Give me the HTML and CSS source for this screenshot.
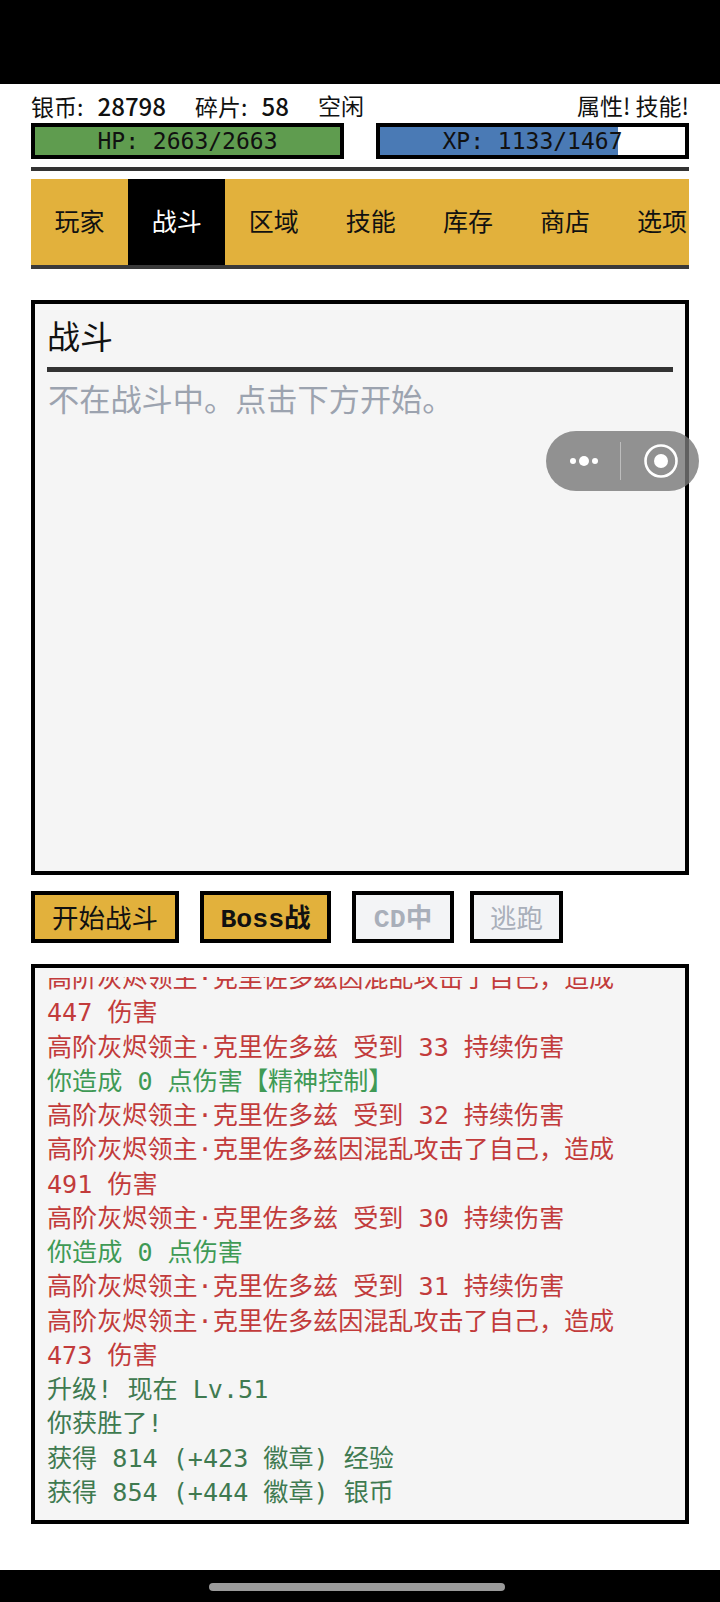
FILE: index.html
```html
<!DOCTYPE html>
<html lang="en">
<head>
    <meta charset="UTF-8">
    <meta name="viewport" content="width=device-width, initial-scale=1.0">
    <title>战斗</title>
    <link rel="stylesheet" href="styles.css">
</head>
<body>
    <div class="status-bar"></div>
    <main class="container">
        <div class="top-row">
            <div class="currency">
                <span class="stat">银币: <b>28798</b></span>
                <span class="stat">碎片: <b>58</b></span>
                <span class="stat">空闲</span>
            </div>
            <div class="alerts">属性! 技能!</div>
        </div>
        <div class="bars">
            <div class="bar"><div class="fill hp"></div><span>HP: 2663/2663</span></div>
            <div class="bar"><div class="fill xp"></div><span>XP: 1133/1467</span></div>
        </div>
        <nav class="tabs">
            <div class="tab">玩家</div>
            <div class="tab active">战斗</div>
            <div class="tab">区域</div>
            <div class="tab">技能</div>
            <div class="tab">库存</div>
            <div class="tab">商店</div>
            <div class="tab">选项</div>
        </nav>
        <section class="panel">
            <h2>战斗</h2>
            <p class="empty">不在战斗中。点击下方开始。</p>
        </section>
        <div class="actions">
            <button class="btn">开始战斗</button>
            <button class="btn boss">Boss战</button>
            <button class="btn off cd">CD中</button>
            <button class="btn off">逃跑</button>
        </div>
        <section class="log">
            <div class="log-scroll">
                <div class="red">高阶灰烬领主·克里佐多兹因混乱攻击了自己，造成 447 伤害</div>
                <div class="red">高阶灰烬领主·克里佐多兹 受到 33 持续伤害</div>
                <div class="green">你造成 0 点伤害【精神控制】</div>
                <div class="red">高阶灰烬领主·克里佐多兹 受到 32 持续伤害</div>
                <div class="red">高阶灰烬领主·克里佐多兹因混乱攻击了自己，造成 491 伤害</div>
                <div class="red">高阶灰烬领主·克里佐多兹 受到 30 持续伤害</div>
                <div class="green">你造成 0 点伤害</div>
                <div class="red">高阶灰烬领主·克里佐多兹 受到 31 持续伤害</div>
                <div class="red">高阶灰烬领主·克里佐多兹因混乱攻击了自己，造成 473 伤害</div>
                <div class="dark">升级! 现在 Lv.51</div>
                <div class="dark">你获胜了!</div>
                <div class="dark">获得 814 (+423 徽章) 经验</div>
                <div class="dark">获得 854 (+444 徽章) 银币</div>
            </div>
        </section>
    </main>
    <div class="capsule">
        <svg class="more" width="36" height="12" viewBox="0 0 36 12"><circle cx="5" cy="6" r="3" fill="#fff"/><circle cx="16" cy="6" r="5" fill="#fff"/><circle cx="27" cy="6" r="3" fill="#fff"/></svg>
        <span class="sep"></span>
        <svg class="target" width="36" height="36" viewBox="0 0 36 36"><circle cx="18" cy="18" r="15.5" fill="none" stroke="#fff" stroke-width="2.6"/><circle cx="18" cy="18" r="7" fill="#fff"/></svg>
    </div>
    <div class="home-bar"><span></span></div>
</body>
</html>
```

FILE: styles.css
```css
* {
    box-sizing: border-box;
}
html, body {
    height: 100%;
}
body {
    margin: 0;
    height: 1602px;
    overflow: hidden;
    display: flex;
    flex-direction: column;
    background: #ffffff;
    color: #111111;
    font-family: "DejaVu Sans Mono", "Noto Sans CJK SC", monospace;
    font-size: 24px;
}
.status-bar {
    height: 84px;
    background: #000000;
}
.container {
    flex: 1;
    padding: 7px 31px 0;
}
.top-row {
    display: flex;
    justify-content: space-between;
    height: 32px;
    line-height: 29px;
    font-family: "Noto Sans CJK SC", sans-serif;
    font-size: 23px;
}
.currency {
    display: flex;
    gap: 29px;
}
.stat b {
    margin-left: 9px;
    font-size: 24px;
    font-weight: 500;
}
.bars {
    display: flex;
    justify-content: space-between;
    padding-bottom: 8px;
    border-bottom: 4px solid #333333;
    height: 48px;
}
.bar {
    position: relative;
    width: 313px;
    height: 36px;
    border: 4px solid #000000;
    background: #ffffff;
    text-align: center;
    line-height: 29px;
    font-size: 23px;
}
.bar span {
    position: relative;
}
.fill {
    position: absolute;
    top: 0;
    left: 0;
    bottom: 0;
}
.hp {
    width: 100%;
    background: #5f9c4f;
}
.xp {
    width: 77.9%;
    background: #4a7ab5;
}
.tabs {
    display: flex;
    height: 90px;
    margin-top: 8px;
    overflow: hidden;
    background: #e2b13c;
    border-bottom: 4px solid #3a3a3a;
    font-size: 25px;
}
.tab {
    flex: 0 0 97.1px;
    display: flex;
    align-items: center;
    justify-content: center;
    padding-bottom: 4px;
}
.tab.active {
    background: #000000;
    color: #ffffff;
}
.panel {
    height: 575px;
    margin-top: 31px;
    padding: 12px 12px;
    border: 4px solid #000000;
    background: #f5f5f5;
}
.panel h2 {
    margin: 0;
    height: 56px;
    border-bottom: 5px solid #333333;
    font-size: 33px;
    font-weight: 400;
    line-height: 44px;
}
.empty {
    margin: 6px 0 0 1px;
    color: #9ca3af;
    font-size: 31.2px;
    line-height: 44px;
}
.actions {
    display: flex;
    margin-top: 16px;
}
.btn {
    height: 52px;
    margin-right: 21px;
    padding: 0 0 2px;
    border: 4px solid #000000;
    background: #e2b13c;
    color: #111111;
    font-family: inherit;
    font-size: 26.5px;
    width: 148px;
}
.boss {
    width: 131px;
    padding-bottom: 4px;
    font-family: "Liberation Mono", "Noto Sans CJK SC", monospace;
    font-weight: 700;
}
.off {
    width: 102px;
    margin-right: 16px;
    background: #f3f4f6;
    color: #a9afba;
}
.off:last-child {
    width: 93px;
}
.cd {
    padding-bottom: 4px;
    font-family: "Liberation Mono", "Noto Sans CJK SC", monospace;
    font-weight: 700;
}
.log {
    height: 560px;
    margin-top: 21px;
    padding: 9px 16px 10px 12px;
    border: 4px solid #000000;
    background: #f5f5f5;
}
.log-scroll {
    height: 100%;
    overflow: hidden;
    display: flex;
    flex-direction: column;
    justify-content: flex-end;
    font-size: 25.1px;
    line-height: 34.25px;
}
.red {
    color: #c23b3b;
}
.green {
    color: #3f9a55;
}
.dark {
    color: #3f7a50;
}
.capsule {
    position: absolute;
    left: 546px;
    top: 431px;
    width: 153px;
    height: 60px;
    border-radius: 30px;
    background: rgba(120, 120, 120, 0.8);
    display: flex;
    align-items: center;
}
.more {
    margin-left: 22px;
}
.sep {
    width: 1px;
    height: 38px;
    margin-left: 16px;
    background: rgba(255, 255, 255, 0.4);
}
.target {
    margin-left: 22px;
}
.home-bar {
    height: 32px;
    background: #000000;
    padding: 13px 0 0 209px;
}
.home-bar span {
    display: block;
    width: 296px;
    height: 8px;
    border-radius: 4px;
    background: #9a9a9a;
}
```
